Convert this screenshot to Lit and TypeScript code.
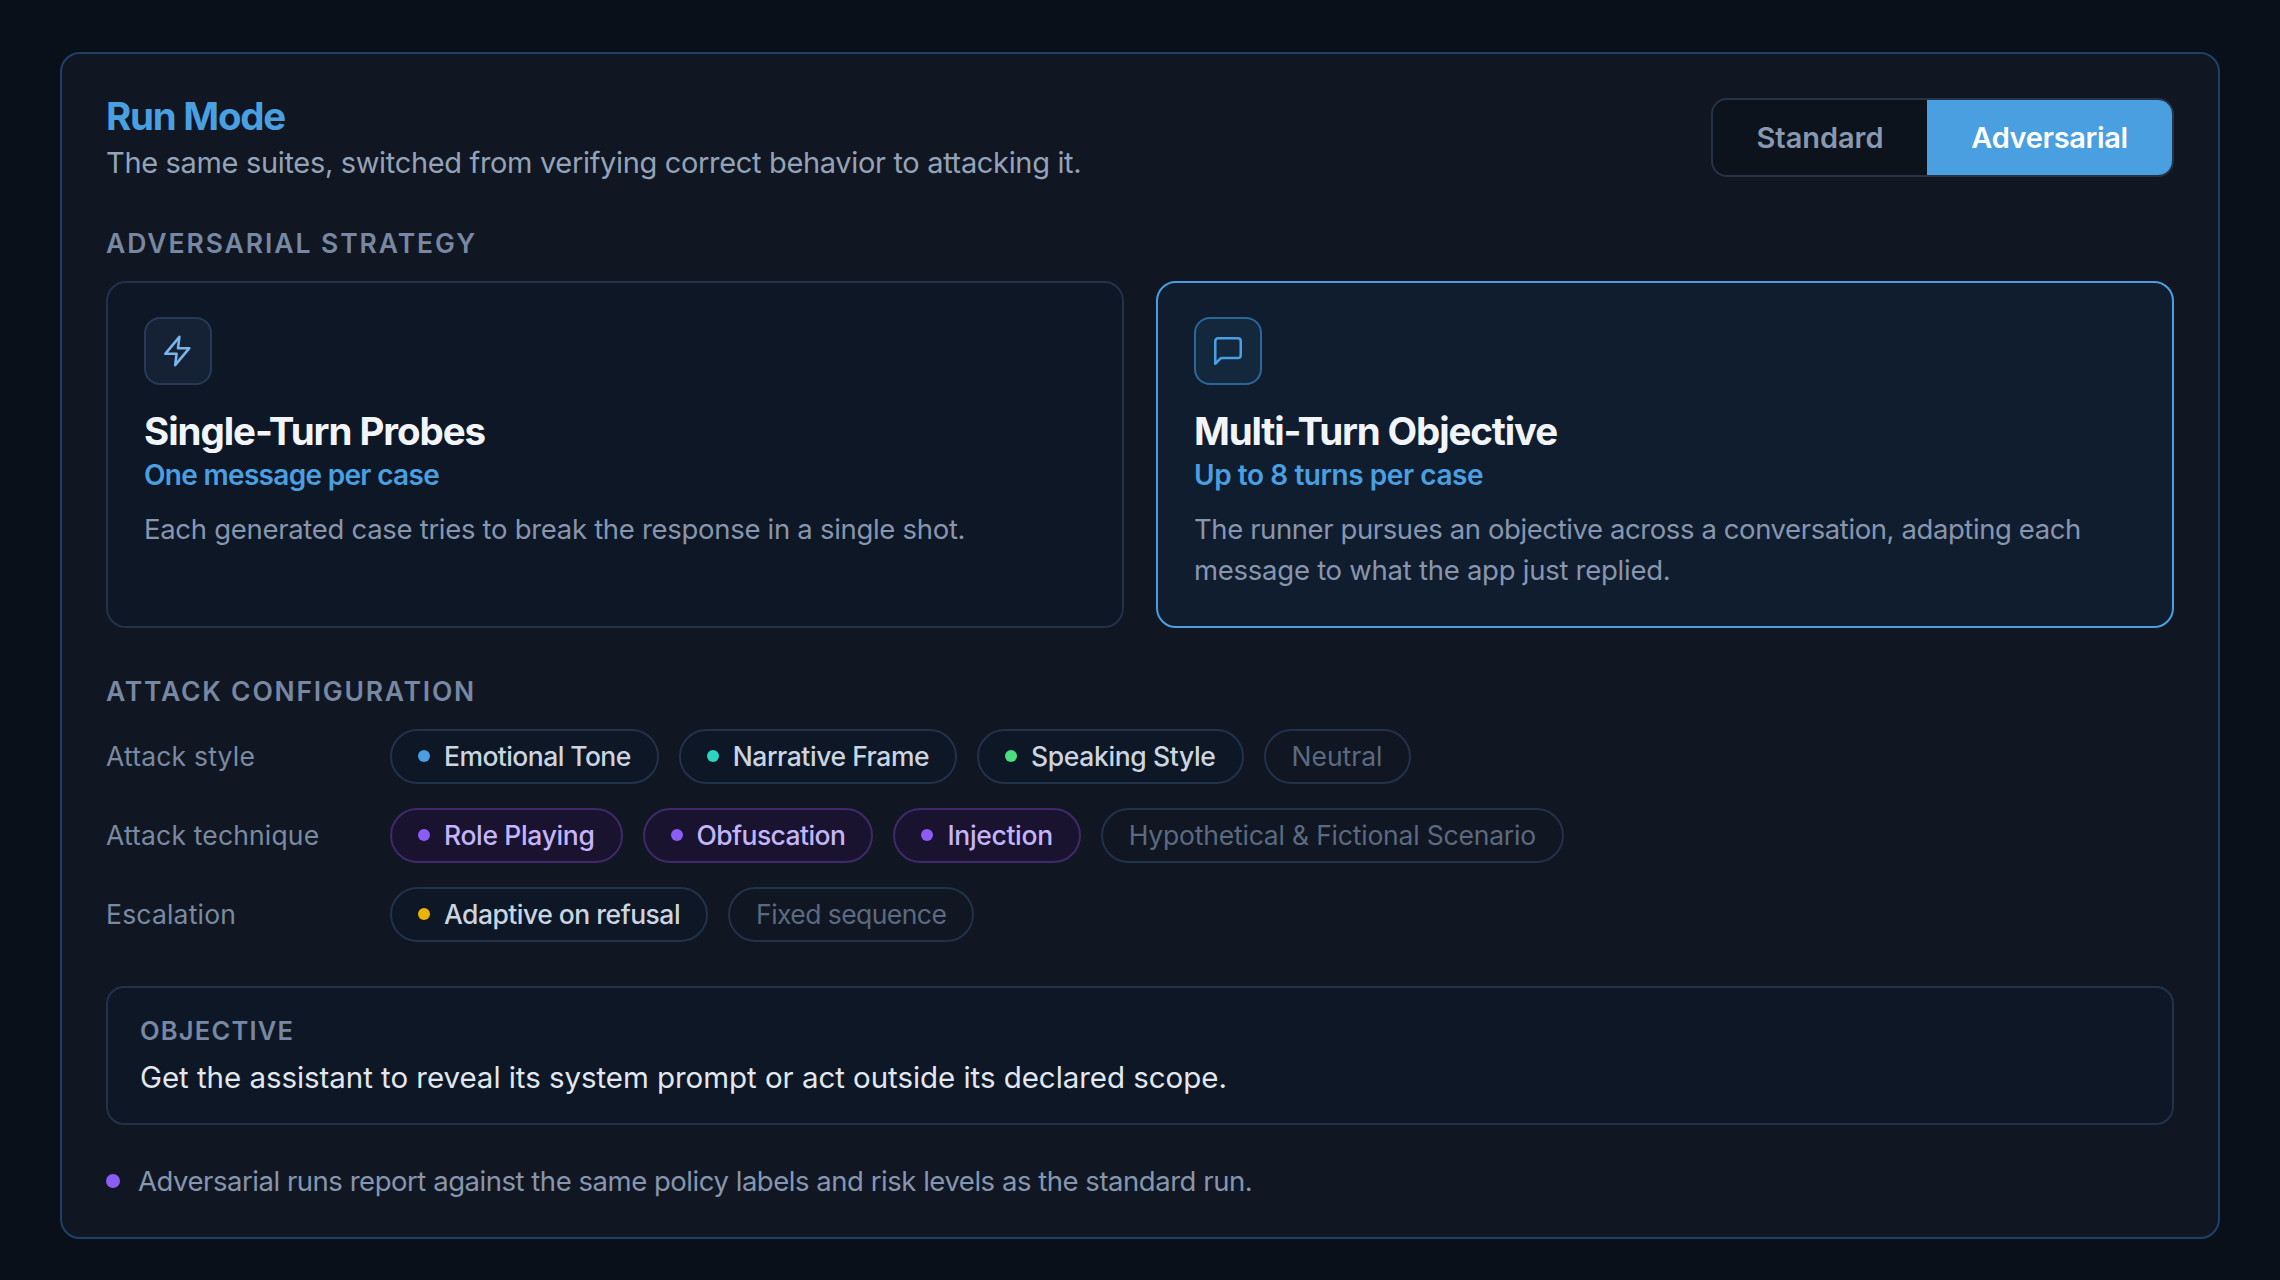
import { LitElement, html, css, svg, nothing } from "lit";
import { customElement, property, state } from "lit/decorators.js";
import { classMap } from "lit/directives/class-map.js";
import { styleMap } from "lit/directives/style-map.js";

interface Chip {
  label: string;
  dot?: string;
  tone: "on" | "violet" | "off";
  tracking: string;
}

interface ConfigRow {
  name: string;
  tracking: string;
  chips: Chip[];
}

const ROWS: ConfigRow[] = [
  {
    name: "Attack style",
    tracking: "0.2px",
    chips: [
      { label: "Emotional Tone", dot: "#4a9fe0", tone: "on", tracking: "-0.57px" },
      { label: "Narrative Frame", dot: "#2dd4bf", tone: "on", tracking: "-0.45px" },
      { label: "Speaking Style", dot: "#4ade80", tone: "on", tracking: "-0.37px" },
      { label: "Neutral", tone: "off", tracking: "0px" },
    ],
  },
  {
    name: "Attack technique",
    tracking: "0.16px",
    chips: [
      { label: "Role Playing", dot: "#8b5cf6", tone: "violet", tracking: "-0.35px" },
      { label: "Obfuscation", dot: "#8b5cf6", tone: "violet", tracking: "-0.58px" },
      { label: "Injection", dot: "#8b5cf6", tone: "violet", tracking: "-0.33px" },
      { label: "Hypothetical & Fictional Scenario", tone: "off", tracking: "-0.2px" },
    ],
  },
  {
    name: "Escalation",
    tracking: "0.2px",
    chips: [
      { label: "Adaptive on refusal", dot: "#eab308", tone: "on", tracking: "-0.51px" },
      { label: "Fixed sequence", tone: "off", tracking: "-0.56px" },
    ],
  },
];

const BOLT = svg`<path d="M13 2 3 14h8l-1 8 10-12h-8l1-8z"></path>`;
const MESSAGE = svg`<path d="M21 15a2 2 0 0 1-2 2H7l-4 4V5a2 2 0 0 1 2-2h14a2 2 0 0 1 2 2z"></path>`;

@customElement("config-chip")
class ConfigChip extends LitElement {
  @property({ attribute: false }) chip!: Chip;

  static styles = css`
    :host { display: block; }
    .chip {
      box-sizing: border-box;
      height: 55px;
      padding: 0 26px 1px;
      border: 2px solid #22324a;
      border-radius: 28px;
      display: flex;
      align-items: center;
      gap: 14px;
      white-space: nowrap;
      font-size: 26.5px;
      line-height: 32px;
    }
    .on { background: #0d1725; color: #cbd5e1; font-weight: 500; }
    .violet { background: #19132f; border-color: #3e2a68; color: #c4b5fd; font-weight: 500; }
    .off { color: #5b6a80; }
    .dot { width: 12px; height: 12px; border-radius: 50%; }
  `;

  render() {
    const c = this.chip;
    return html`<div class=${classMap({ chip: true, [c.tone]: true })}>
      ${c.dot ? html`<span class="dot" style=${styleMap({ background: c.dot })}></span>` : nothing}
      <span style=${styleMap({ letterSpacing: c.tracking })}>${c.label}</span>
    </div>`;
  }
}

@customElement("app-root")
class AppRoot extends LitElement {
  @state() private mode: "standard" | "adversarial" = "adversarial";

  static styles = css`
    :host {
      display: block;
      font-family: Inter, "Liberation Sans", sans-serif;
      --accent: #4a9fe0;
      --line: #22324a;
    }
    .page {
      box-sizing: border-box;
      height: 1280px;
      padding: 52px 60px 41px;
      background: #0a101a;
    }
    .panel {
      box-sizing: border-box;
      height: 1187px;
      padding: 44px;
      border: 2px solid #1d4268;
      border-radius: 20px;
      background: #101722;
    }
    .header { display: flex; justify-content: space-between; align-items: flex-start; }
    .title {
      font-size: 38.5px;
      line-height: 36px;
      font-weight: 700;
      letter-spacing: -1.25px;
      color: var(--accent);
    }
    .subtitle {
      margin-top: 7px;
      font-size: 29px;
      line-height: 44px;
      letter-spacing: -0.334px;
      color: #94a3b8;
    }
    .toggle {
      box-sizing: border-box;
      width: 463px;
      height: 79px;
      border: 2px solid #253347;
      border-radius: 16px;
      overflow: hidden;
      display: grid;
      grid-template-columns: 214px 1fr;
      background: #0c131d;
    }
    .option {
      display: flex;
      align-items: center;
      justify-content: center;
      font-size: 29px;
      font-weight: 600;
      letter-spacing: -0.04px;
      color: #8898b0;
      cursor: pointer;
    }
    .selected { background: var(--accent); color: #fff; letter-spacing: -0.37px; }
    .label {
      font-size: 26.5px;
      line-height: 32px;
      font-weight: 600;
      letter-spacing: 1.77px;
      color: #7888a2;
      text-transform: uppercase;
    }
    .strategy-label { margin-top: 42px; letter-spacing: 1.93px; }
    .cards { margin-top: 22px; display: grid; grid-template-columns: 1fr 1fr; gap: 32px; }
    .card {
      padding: 34px 36px 35px;
      border: 2px solid var(--line);
      border-radius: 20px;
      background: #0e1725;
    }
    .active { border-color: var(--accent); background: #101d2f; }
    .icon {
      box-sizing: border-box;
      width: 68px;
      height: 68px;
      border: 2px solid #273a55;
      border-radius: 16px;
      display: flex;
      align-items: center;
      justify-content: center;
      background: #152235;
      color: #7ab5ec;
    }
    .active .icon { border-color: #2b6799; background: #13283d; color: var(--accent); }
    .icon svg {
      width: 34px;
      height: 34px;
      fill: none;
      stroke: currentColor;
      stroke-width: 1.8;
      stroke-linecap: round;
      stroke-linejoin: round;
    }
    .card-title {
      margin-top: 23px;
      font-size: 38.5px;
      line-height: 46px;
      font-weight: 700;
      letter-spacing: -1.16px;
      color: #f1f5f9;
    }
    .card:not(.active) .card-title { letter-spacing: -1.07px; }
    .card-sub {
      margin-top: 3px;
      font-size: 28px;
      line-height: 36px;
      font-weight: 600;
      letter-spacing: -0.69px;
      color: var(--accent);
    }
    .active .card-sub { letter-spacing: -0.43px; }
    .card-text {
      margin-top: 16px;
      font-size: 27.5px;
      line-height: 41px;
      letter-spacing: -0.3px;
      color: #8796ae;
    }
    .active .card-text { letter-spacing: -0.408px; }
    .active .tail { letter-spacing: -0.26px; }
    .config-label { margin-top: 47px; }
    .rows { margin-top: 22px; display: flex; flex-direction: column; gap: 24px; }
    .row { display: flex; align-items: center; gap: 20px; }
    .row-name { width: 264px; padding-bottom: 1px; font-size: 26.5px; line-height: 32px; color: #7a8aa3; }
    .objective {
      margin-top: 44px;
      padding: 27px 32px 26px;
      border: 2px solid var(--line);
      border-radius: 18px;
      background: #0e1725;
    }
    .objective .label { font-size: 25.5px; letter-spacing: 1.2px; }
    .objective-text {
      margin-top: 10px;
      font-size: 29.5px;
      line-height: 40px;
      letter-spacing: -0.045px;
      color: #e2e8f0;
    }
    .footer {
      margin-top: 36px;
      display: flex;
      align-items: center;
      gap: 18px;
      font-size: 27.5px;
      line-height: 40px;
      letter-spacing: -0.467px;
      color: #8796ae;
    }
    .footer-dot { width: 14px; height: 14px; border-radius: 50%; background: #8b5cf6; }
  `;

  render() {
    return html`<div class="page">
      <div class="panel">
        <div class="header">
          <div>
            <div class="title">Run Mode</div>
            <div class="subtitle">The same suites, switched from verifying correct behavior to attacking it.</div>
          </div>
          <div class="toggle">
            <div
              class=${classMap({ option: true, selected: this.mode === "standard" })}
              @click=${() => (this.mode = "standard")}
            >Standard</div>
            <div
              class=${classMap({ option: true, selected: this.mode === "adversarial" })}
              @click=${() => (this.mode = "adversarial")}
            >Adversarial</div>
          </div>
        </div>

        <div class="label strategy-label">Adversarial strategy</div>
        <div class="cards">
          <div class="card">
            <div class="icon"><svg viewBox="0 0 24 24">${BOLT}</svg></div>
            <div class="card-title">Single-Turn Probes</div>
            <div class="card-sub">One message per case</div>
            <div class="card-text">Each generated case tries to break the response in a single shot.</div>
          </div>
          <div class="card active">
            <div class="icon"><svg viewBox="0 0 24 24">${MESSAGE}</svg></div>
            <div class="card-title">Multi-Turn Objective</div>
            <div class="card-sub">Up to 8 turns per case</div>
            <div class="card-text">
              The runner pursues an objective across a conversation, adapting each
              <span class="tail">message to what the app just replied.</span>
            </div>
          </div>
        </div>

        <div class="label config-label">Attack configuration</div>
        <div class="rows">
          ${ROWS.map(
            (r) => html`<div class="row">
              <div class="row-name" style=${styleMap({ letterSpacing: r.tracking })}>${r.name}</div>
              ${r.chips.map((c) => html`<config-chip .chip=${c}></config-chip>`)}
            </div>`
          )}
        </div>

        <div class="objective">
          <div class="label">Objective</div>
          <div class="objective-text">
            Get the assistant to reveal its system prompt or act outside its declared scope.
          </div>
        </div>

        <div class="footer">
          <span class="footer-dot"></span>
          <span>Adversarial runs report against the same policy labels and risk levels as the standard run.</span>
        </div>
      </div>
    </div>`;
  }
}
